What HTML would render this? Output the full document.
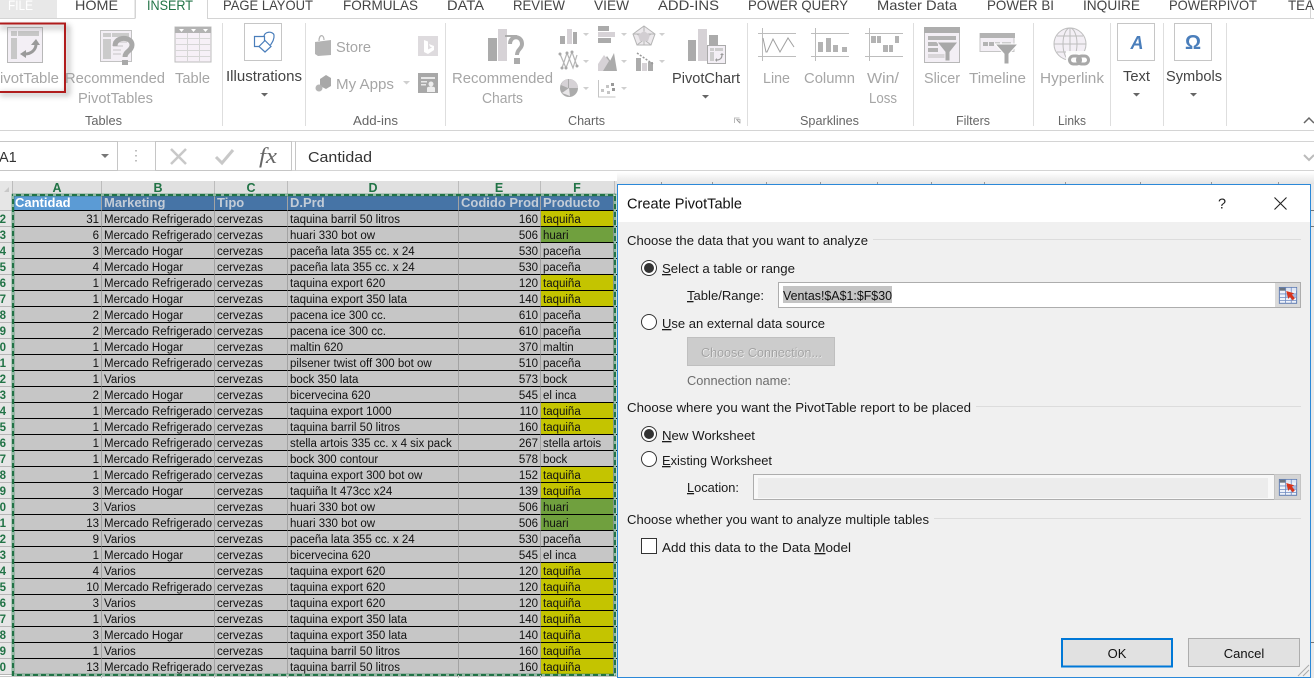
<!DOCTYPE html>
<html lang="en"><head><meta charset="utf-8"><title>Create PivotTable</title>
<style>
html,body{margin:0;padding:0;background:#fff;width:1314px;height:678px;overflow:hidden}
svg{position:absolute;left:0;top:0}
svg text{font-family:"Liberation Sans",sans-serif}
table{position:absolute;left:0;top:195px;border-collapse:separate;border-spacing:0;table-layout:fixed;width:614px;font:11.5px/11px "Liberation Sans",sans-serif;color:#111;background:#c6c6c6}
td{height:11px;padding:4px 0 0 2px;border-bottom:1px solid #000;border-right:1px solid #a3a3a3;white-space:nowrap;box-sizing:content-box}
td:first-child{background:#e6e6e6;color:#217346;font-weight:bold;text-align:right;padding:4px 0 0;border-right:1px solid #b5b5b5;border-bottom:1px solid #b5b5b5;text-indent:0}
td:first-child span{display:block;width:6px;overflow:visible;direction:rtl}
td.r{text-align:right;padding:4px 2px 0 0}
td.y{background:#c4c400}
td.g{background:#70a03e}
tr.h td{height:15px;line-height:15px;padding-top:0;background:#4674a6;color:#c3ccd7;font-weight:bold;font-size:13px}
tr.h td:first-child{background:#e6e6e6}
tr.h td.a{background:#5b9bd5;color:#fff}
</style></head><body>
<table>
<colgroup><col style="width:13px"><col style="width:89px"><col style="width:113px"><col style="width:73px"><col style="width:171px"><col style="width:82px"><col style="width:73px"></colgroup>
<tr class="h"><td></td><td class="a">Cantidad</td><td>Marketing</td><td>Tipo</td><td>D.Prd</td><td>Codido Prod</td><td>Producto</td></tr>
<tr><td><span>2</span></td><td class="r">31</td><td>Mercado Refrigerado</td><td>cervezas</td><td>taquina barril 50 litros</td><td class="r">160</td><td class="y">taquiña</td></tr>
<tr><td><span>3</span></td><td class="r">6</td><td>Mercado Refrigerado</td><td>cervezas</td><td>huari 330 bot ow</td><td class="r">506</td><td class="g">huari</td></tr>
<tr><td><span>4</span></td><td class="r">3</td><td>Mercado Hogar</td><td>cervezas</td><td>paceña lata 355 cc. x 24</td><td class="r">530</td><td>paceña</td></tr>
<tr><td><span>5</span></td><td class="r">4</td><td>Mercado Hogar</td><td>cervezas</td><td>paceña lata 355 cc. x 24</td><td class="r">530</td><td>paceña</td></tr>
<tr><td><span>6</span></td><td class="r">1</td><td>Mercado Refrigerado</td><td>cervezas</td><td>taquina export 620</td><td class="r">120</td><td class="y">taquiña</td></tr>
<tr><td><span>7</span></td><td class="r">1</td><td>Mercado Hogar</td><td>cervezas</td><td>taquina export 350 lata</td><td class="r">140</td><td class="y">taquiña</td></tr>
<tr><td><span>8</span></td><td class="r">2</td><td>Mercado Hogar</td><td>cervezas</td><td>pacena ice 300 cc.</td><td class="r">610</td><td>paceña</td></tr>
<tr><td><span>9</span></td><td class="r">2</td><td>Mercado Refrigerado</td><td>cervezas</td><td>pacena ice 300 cc.</td><td class="r">610</td><td>paceña</td></tr>
<tr><td><span>0</span></td><td class="r">1</td><td>Mercado Hogar</td><td>cervezas</td><td>maltin 620</td><td class="r">370</td><td>maltin</td></tr>
<tr><td><span>1</span></td><td class="r">1</td><td>Mercado Refrigerado</td><td>cervezas</td><td>pilsener twist off 300 bot ow</td><td class="r">510</td><td>paceña</td></tr>
<tr><td><span>2</span></td><td class="r">1</td><td>Varios</td><td>cervezas</td><td>bock 350 lata</td><td class="r">573</td><td>bock</td></tr>
<tr><td><span>3</span></td><td class="r">2</td><td>Mercado Hogar</td><td>cervezas</td><td>bicervecina 620</td><td class="r">545</td><td>el inca</td></tr>
<tr><td><span>4</span></td><td class="r">1</td><td>Mercado Refrigerado</td><td>cervezas</td><td>taquina export 1000</td><td class="r">110</td><td class="y">taquiña</td></tr>
<tr><td><span>5</span></td><td class="r">1</td><td>Mercado Refrigerado</td><td>cervezas</td><td>taquina barril 50 litros</td><td class="r">160</td><td class="y">taquiña</td></tr>
<tr><td><span>6</span></td><td class="r">1</td><td>Mercado Refrigerado</td><td>cervezas</td><td>stella artois 335 cc. x 4 six pack</td><td class="r">267</td><td>stella artois</td></tr>
<tr><td><span>7</span></td><td class="r">1</td><td>Mercado Refrigerado</td><td>cervezas</td><td>bock 300 contour</td><td class="r">578</td><td>bock</td></tr>
<tr><td><span>8</span></td><td class="r">1</td><td>Mercado Refrigerado</td><td>cervezas</td><td>taquina export 300 bot ow</td><td class="r">152</td><td class="y">taquiña</td></tr>
<tr><td><span>9</span></td><td class="r">3</td><td>Mercado Hogar</td><td>cervezas</td><td>taquiña lt 473cc x24</td><td class="r">139</td><td class="y">taquiña</td></tr>
<tr><td><span>0</span></td><td class="r">3</td><td>Varios</td><td>cervezas</td><td>huari 330 bot ow</td><td class="r">506</td><td class="g">huari</td></tr>
<tr><td><span>1</span></td><td class="r">13</td><td>Mercado Refrigerado</td><td>cervezas</td><td>huari 330 bot ow</td><td class="r">506</td><td class="g">huari</td></tr>
<tr><td><span>2</span></td><td class="r">9</td><td>Varios</td><td>cervezas</td><td>paceña lata 355 cc. x 24</td><td class="r">530</td><td>paceña</td></tr>
<tr><td><span>3</span></td><td class="r">1</td><td>Mercado Hogar</td><td>cervezas</td><td>bicervecina 620</td><td class="r">545</td><td>el inca</td></tr>
<tr><td><span>4</span></td><td class="r">4</td><td>Varios</td><td>cervezas</td><td>taquina export 620</td><td class="r">120</td><td class="y">taquiña</td></tr>
<tr><td><span>5</span></td><td class="r">10</td><td>Mercado Refrigerado</td><td>cervezas</td><td>taquina export 620</td><td class="r">120</td><td class="y">taquiña</td></tr>
<tr><td><span>6</span></td><td class="r">3</td><td>Varios</td><td>cervezas</td><td>taquina export 620</td><td class="r">120</td><td class="y">taquiña</td></tr>
<tr><td><span>7</span></td><td class="r">1</td><td>Varios</td><td>cervezas</td><td>taquina export 350 lata</td><td class="r">140</td><td class="y">taquiña</td></tr>
<tr><td><span>8</span></td><td class="r">3</td><td>Mercado Hogar</td><td>cervezas</td><td>taquina export 350 lata</td><td class="r">140</td><td class="y">taquiña</td></tr>
<tr><td><span>9</span></td><td class="r">1</td><td>Varios</td><td>cervezas</td><td>taquina barril 50 litros</td><td class="r">160</td><td class="y">taquiña</td></tr>
<tr><td><span>0</span></td><td class="r">13</td><td>Mercado Refrigerado</td><td>cervezas</td><td>taquina barril 50 litros</td><td class="r">160</td><td class="y">taquiña</td></tr>
</table>

<svg width="1314" height="678" viewBox="0 0 1314 678" xmlns="http://www.w3.org/2000/svg">
<defs>
<filter id="b" x="-20%" y="-20%" width="140%" height="140%"><feGaussianBlur stdDeviation="3"/></filter>
<linearGradient id="sh" x1="0" y1="0" x2="0" y2="1"><stop offset="0" stop-color="#fff"/><stop offset="1" stop-color="#e4e4e4"/></linearGradient>
<g id="rb">
<rect x="0.500" y="2" width="24" height="22" fill="#eef2fa" stroke="#5a78b0" stroke-width="1.300"/>
<rect x="1" y="2.500" width="9" height="4" fill="#6a7480"/>
<rect x="10" y="2.500" width="14" height="4" fill="#dfe6f4"/>
<path d="M1 11h23M1 16h23M1 20h23M9 2v22M17 2v22" stroke="#6f8ac0" stroke-width="1.100"/>
<rect x="10" y="12" width="14" height="4" fill="#a9bbdf"/>
<path d="M10 7l11 3-3 2 4 5-3 3-4-5-2 3z" fill="#d8341c"/>
</g>
</defs>

<!-- tabs -->
<rect x="0" y="0" width="57" height="18" fill="#e8e8e8"/>
<path d="M0 18.500H135V0M207.500 0V18.500H1314" fill="none" stroke="#d4d4d4"/>
<path d="M135.500 0V18M207.500 0V18" stroke="#d4d4d4"/>
<rect x="1310" y="0" width="1" height="18" fill="#d4d4d4"/>
<g font-size="14" fill="#444">
<text x="8" y="10" fill="#fff" textLength="25" lengthAdjust="spacingAndGlyphs">FILE</text>
<text x="75" y="10" textLength="43" lengthAdjust="spacingAndGlyphs">HOME</text>
<text x="147" y="10" fill="#217346" textLength="46" lengthAdjust="spacingAndGlyphs">INSERT</text>
<text x="223" y="10" textLength="90" lengthAdjust="spacingAndGlyphs">PAGE LAYOUT</text>
<text x="343" y="10" textLength="75" lengthAdjust="spacingAndGlyphs">FORMULAS</text>
<text x="447" y="10" textLength="37" lengthAdjust="spacingAndGlyphs">DATA</text>
<text x="513" y="10" textLength="52" lengthAdjust="spacingAndGlyphs">REVIEW</text>
<text x="594" y="10" textLength="35" lengthAdjust="spacingAndGlyphs">VIEW</text>
<text x="658" y="10" textLength="61" lengthAdjust="spacingAndGlyphs">ADD-INS</text>
<text x="748" y="10" textLength="100" lengthAdjust="spacingAndGlyphs">POWER QUERY</text>
<text x="877" y="10" textLength="80" lengthAdjust="spacingAndGlyphs">Master Data</text>
<text x="987" y="10" textLength="67" lengthAdjust="spacingAndGlyphs">POWER BI</text>
<text x="1083" y="10" textLength="57" lengthAdjust="spacingAndGlyphs">INQUIRE</text>
<text x="1169" y="10" textLength="88" lengthAdjust="spacingAndGlyphs">POWERPIVOT</text>
<text x="1288" y="10" textLength="26" lengthAdjust="spacingAndGlyphs">TEA</text>
</g>

<!-- ribbon separators -->
<g stroke="#dedede"><path d="M222.500 23V126M305.500 23V126M445.500 23V126M747.500 23V126M913.500 23V126M1033.500 23V126M1110.500 23V126M1163.500 23V126M1226.500 23V126"/></g>
<path d="M0 130.500H1314" stroke="#d4d4d4"/>

<!-- ribbon text -->
<g font-size="14.500" fill="#a6a6a6">
<text x="-10" y="83" textLength="69" lengthAdjust="spacingAndGlyphs">PivotTable</text>
<text x="65" y="83" textLength="100" lengthAdjust="spacingAndGlyphs">Recommended</text>
<text x="78" y="103" textLength="75" lengthAdjust="spacingAndGlyphs">PivotTables</text>
<text x="175" y="83" textLength="35" lengthAdjust="spacingAndGlyphs">Table</text>
<text x="336" y="52" textLength="35" lengthAdjust="spacingAndGlyphs">Store</text>
<text x="336" y="89" textLength="58" lengthAdjust="spacingAndGlyphs">My Apps</text>
<text x="452" y="83" textLength="101" lengthAdjust="spacingAndGlyphs">Recommended</text>
<text x="482" y="103" textLength="41" lengthAdjust="spacingAndGlyphs">Charts</text>
<text x="763" y="83" textLength="27" lengthAdjust="spacingAndGlyphs">Line</text>
<text x="804" y="83" textLength="51" lengthAdjust="spacingAndGlyphs">Column</text>
<text x="867" y="83" textLength="32" lengthAdjust="spacingAndGlyphs">Win/</text>
<text x="869" y="103" textLength="28" lengthAdjust="spacingAndGlyphs">Loss</text>
<text x="924" y="83" textLength="36" lengthAdjust="spacingAndGlyphs">Slicer</text>
<text x="969" y="83" textLength="57" lengthAdjust="spacingAndGlyphs">Timeline</text>
<text x="1040" y="83" textLength="64" lengthAdjust="spacingAndGlyphs">Hyperlink</text>
</g>
<g font-size="14.500" fill="#444">
<text x="226" y="81" textLength="76" lengthAdjust="spacingAndGlyphs">Illustrations</text>
<text x="672" y="83" textLength="68" lengthAdjust="spacingAndGlyphs">PivotChart</text>
<text x="1123" y="81" textLength="27" lengthAdjust="spacingAndGlyphs">Text</text>
<text x="1166" y="81" textLength="56" lengthAdjust="spacingAndGlyphs">Symbols</text>
</g>
<g font-size="13" fill="#666">
<text x="85" y="125" textLength="37" lengthAdjust="spacingAndGlyphs">Tables</text>
<text x="353" y="125" textLength="45" lengthAdjust="spacingAndGlyphs">Add-ins</text>
<text x="568" y="125" textLength="37" lengthAdjust="spacingAndGlyphs">Charts</text>
<text x="800" y="125" textLength="59" lengthAdjust="spacingAndGlyphs">Sparklines</text>
<text x="956" y="125" textLength="34" lengthAdjust="spacingAndGlyphs">Filters</text>
<text x="1058" y="125" textLength="28" lengthAdjust="spacingAndGlyphs">Links</text>
</g>

<!-- dropdown arrows -->
<g fill="#666">
<path d="M261 93h7l-3.500 3.500zM702 95h7l-3.500 3.500zM1133 93h7l-3.500 3.500zM1190 93h7l-3.500 3.500z"/>
</g>
<g fill="#cfcfcf">
<path d="M403 81h7l-3.500 3.500zM583 33h6l-3 3zM621 33h6l-3 3zM659 33h6l-3 3zM583 60h6l-3 3zM621 60h6l-3 3zM659 60h6l-3 3zM583 87h6l-3 3zM621 87h6l-3 3z"/>
</g>

<!-- PivotTable icon -->
<rect x="7.500" y="27.500" width="35" height="35" fill="#f3eff5" stroke="#b8b8b8"/>
<rect x="18" y="31" width="21" height="5" fill="#c8c8c8"/><rect x="11" y="31" width="6" height="5" fill="#c8c8c8"/><rect x="11" y="38" width="6" height="21" fill="#c8c8c8"/>
<path d="M25 54C31 54 36 50 36 44" fill="none" stroke="#9a9a9a" stroke-width="3"/><path d="M31 45l5-6 4 6zM26 50l-6 4 6 4z" fill="#9a9a9a"/>
<!-- Recommended PivotTables icon -->
<rect x="100.500" y="30.500" width="31" height="31" fill="#f3eff5" stroke="#c2c2c2"/>
<rect x="103" y="33" width="8" height="4" fill="#cbcbcb"/><rect x="112" y="33" width="17" height="4" fill="#cbcbcb"/><rect x="103" y="39" width="8" height="20" fill="#cbcbcb"/>
<path d="M113 42h14M113 46h10M113 50h8M113 54h8" stroke="#d5d2d5" stroke-width="1.500"/>
<path d="M115 46c0-10 17-10 17-1 0 6-7 6-7 12" fill="none" stroke="#a9a9a9" stroke-width="5"/><rect x="122" y="60" width="6" height="5" fill="#a9a9a9"/>
<!-- Table icon -->
<rect x="175" y="27" width="36" height="35" fill="#f6f0f7" stroke="#bdbdbd"/>
<rect x="175" y="27" width="36" height="6" fill="#b3b3b3"/>
<path d="M179 29h5l-2.500 3zM191 29h5l-2.500 3zM203 29h5l-2.500 3z" fill="#fff"/>
<path d="M175 38.500h36M175 44.500h36M175 50.500h36M175 56.500h36M187.500 33v29M199.500 33v29" stroke="#d6d6d6"/>
<!-- Illustrations -->
<rect x="244.500" y="23.500" width="37" height="37" fill="#fff" stroke="#c6c6c6"/>
<path d="M254.500 36.500h10v10h-10z" fill="none" stroke="#4a7ebb" stroke-width="1.200"/>
<path d="M265 40.500l6 6-6 5.500-6-5.500z" fill="#fff" stroke="#4a7ebb" stroke-width="1.200"/>
<path d="M264 37c0-6 9-6 10-2 .5 4-1.500 7-3.500 10" fill="none" stroke="#4a7ebb" stroke-width="1.200"/>
<!-- Store -->
<path d="M315 42l16-2v15l-13 1-3-2z" fill="#b3b3b3"/><path d="M319 41c0-7 5-7 5-1" fill="none" stroke="#b3b3b3" stroke-width="1.200"/>
<rect x="418" y="36" width="20" height="20" fill="#dedbde"/><path d="M424 40l4 1.500v8l4-2-2-1-1-2.500 5 2v4l-6 4-4-2z" fill="#fff"/>
<!-- My apps -->
<path d="M320 79l6-4 5 3v8l-5 3-6-3z" fill="#a8a8a8"/><circle cx="319" cy="88" r="3.500" fill="#b5b5b5"/>
<rect x="418" y="73" width="20" height="20" fill="#a8a8a8"/>
<path d="M421 77h14v2h-14zM421 81h6v1.500h-6zM421 84h5v1.500h-5z" fill="#e8e8e8"/><circle cx="431" cy="84" r="2.500" fill="#eee"/><path d="M427 92v-4c0-2 8-2 8 0v4z" fill="#eee"/>
<!-- Rec charts -->
<rect x="488" y="38" width="9" height="23" fill="#ababab"/><rect x="498" y="29" width="9" height="32" fill="#d6d2d6"/><rect x="505" y="35" width="12" height="2" fill="#ababab"/>
<path d="M510 44c0-9 12-9 12 0 0 5-5 5-5 11" fill="none" stroke="#ababab" stroke-width="4"/><rect x="514" y="58" width="6" height="6" fill="#ababab"/>
<!-- chart galleries -->
<g fill="#ababab">
<rect x="560" y="36" width="5" height="8"/><rect x="567" y="29" width="5" height="15" fill="#d6d2d6"/><rect x="573" y="32" width="4" height="12"/>
<rect x="598" y="26" width="11" height="5"/><rect x="598" y="32" width="17" height="5" fill="#d6d2d6"/><rect x="598" y="38" width="13" height="5"/>
</g>
<path d="M644 26l11 8-4 11h-14l-4-11z" fill="#ece9ec" stroke="#b5b5b5"/><path d="M644 26v19M633 34h22M637 45l14-11M651 45l-14-11" stroke="#b5b5b5"/><path d="M644 31l6 4-2 6h-8l-2-6z" fill="#d2ced2"/>
<path d="M560 54l6 14 6-16 5 14M562 68l5-15 6 15 4-13" fill="none" stroke="#b5b5b5" stroke-width="1.200"/>
<g fill="#a8a8a8"><circle cx="560" cy="54" r="1.500"/><circle cx="566" cy="68" r="1.500"/><circle cx="572" cy="52" r="1.500"/><circle cx="577" cy="66" r="1.500"/><circle cx="562" cy="68" r="1.500"/><circle cx="567" cy="53" r="1.500"/></g>
<path d="M598 71l9-15 5 7 4 8z" fill="#ababab"/><path d="M598 71v-7l6-9 5 6-6 10z" fill="#d6d2d6"/><path d="M605 71l9-18 3 18z" fill="#ababab"/>
<g fill="#ababab"><rect x="636" y="58" width="5" height="13"/><rect x="642" y="63" width="5" height="8" fill="#d6d2d6"/><rect x="648" y="62" width="5" height="9"/></g>
<path d="M637 53l16 11" stroke="#999" stroke-dasharray="2 1.500" stroke-width="1.500"/>
<circle cx="569" cy="88" r="9" fill="#ababab"/><path d="M569 88V79a9 9 0 0 1 9 9z" fill="#d6d2d6"/><path d="M561 85a9 9 0 0 1 7-6v9z" fill="#d6d2d6"/><path d="M562 93l7-5 1 8z" fill="#e8e6e8"/>
<path d="M598.500 80v17h17" fill="none" stroke="#c5c5c5"/><g fill="#c5c5c5"><rect x="601" y="89" width="3" height="3"/><rect x="606" y="85" width="3" height="3"/><rect x="611" y="83" width="3" height="3" fill="#999"/><rect x="607" y="91" width="3" height="3"/><rect x="612" y="88" width="3" height="3" fill="#999"/></g>
<!-- PivotChart -->
<rect x="688" y="40" width="8" height="21" fill="#ababab"/><rect x="698" y="29" width="9" height="32" fill="#d6d2d6"/><rect x="709" y="35" width="9" height="10" fill="#ababab"/>
<rect x="707.500" y="45.500" width="18" height="18" fill="#f3eff5" stroke="#aaa"/>
<rect x="710" y="48" width="4" height="3" fill="#ccc"/><rect x="715" y="48" width="8" height="3" fill="#ccc"/><rect x="710" y="52" width="4" height="9" fill="#ccc"/>
<path d="M717 60c3 0 5-2 5-5" fill="none" stroke="#999" stroke-width="1.200"/><path d="M720 55l2-2 2 2zM717 58l-2 2 2 2z" fill="#999"/>
<!-- launcher -->
<path d="M734.500 123v-5h5M736 119.500h4v4" fill="none" stroke="#bbb"/><path d="M737 120l3 3" stroke="#999"/>
<!-- sparkline -->
<g stroke="#bdbdbd" fill="none">
<path d="M758 33.500h38M758 56.500h38M762.500 28v33"/><path d="M763 38l3 14 1 0 6-13 7 13 8-14 6 9" stroke="#a0a0a0"/>
<path d="M811 33.500h38M811 56.500h38M815.500 28v33"/>
<path d="M865 33.500h38M865 56.500h38M869.500 28v33"/>
</g>
<g fill="#b3b3b3"><rect x="818" y="42" width="5" height="10"/><rect x="826" y="38" width="5" height="14"/><rect x="833" y="45" width="5" height="7"/><rect x="842" y="47" width="5" height="5"/>
<rect x="871" y="36" width="5" height="7"/><rect x="877" y="36" width="4" height="7"/><rect x="883" y="45" width="5" height="7"/><rect x="889" y="45" width="4" height="7"/><rect x="895" y="36" width="4" height="7"/></g>
<!-- Slicer -->
<rect x="924.500" y="27.500" width="35" height="35" fill="#f3eff5" stroke="#b8b8b8"/>
<rect x="924" y="27" width="36" height="6" fill="#adadad"/>
<g fill="#b3b3b3"><rect x="928" y="36" width="28" height="4"/><rect x="928" y="42" width="10" height="4"/><rect x="928" y="48" width="10" height="4"/></g><rect x="928" y="54" width="18" height="4" fill="#d8d5d8"/>
<path d="M937 42h21l-8 10v9h-5v-9z" fill="#a8a8a8" stroke="#f3eff5"/>
<!-- Timeline -->
<rect x="980.500" y="33.500" width="34" height="18" fill="#f3eff5" stroke="#c5c5c5" transform="translate(-.5 0)"/>
<rect x="980" y="33" width="35" height="5" fill="#b3b3b3"/>
<g fill="#b3b3b3"><rect x="983" y="42" width="5" height="4"/><rect x="989" y="42" width="5" height="4"/><rect x="995" y="42" width="5" height="3" fill="#ccc"/><rect x="1002" y="42" width="9" height="3" fill="#ccc"/></g>
<path d="M995 44h23l-9 10v10h-5v-10z" fill="#a8a8a8" stroke="#fff"/>
<!-- Hyperlink -->
<circle cx="1070" cy="44" r="16" fill="#f3eff5" stroke="#bdbdbd"/>
<ellipse cx="1070" cy="44" rx="7" ry="16" fill="none" stroke="#bdbdbd"/><path d="M1070 28v32M1054 44h32M1057 36h26M1057 52h26" stroke="#bdbdbd"/>
<path d="M1066 51h24v15h-24z" fill="#fff" opacity=".9"/>
<rect x="1069.500" y="56" width="11" height="8" rx="4" fill="none" stroke="#a8a8a8" stroke-width="3"/><rect x="1077.500" y="56" width="11" height="8" rx="4" fill="none" stroke="#a8a8a8" stroke-width="3"/>
<!-- Text/Symbols -->
<rect x="1117.500" y="23.500" width="37" height="37" fill="#fff" stroke="#c6c6c6"/>
<text x="1137" y="49" text-anchor="middle" font-size="18" font-style="italic" font-weight="bold" fill="#4a7ebb">A</text>
<rect x="1174.500" y="23.500" width="37" height="37" fill="#fff" stroke="#c6c6c6"/>
<text x="1193" y="49" text-anchor="middle" font-size="20" font-weight="bold" fill="#4a7ebb">Ω</text>
<path d="M1304 123l5-5 5 5" fill="none" stroke="#666" stroke-width="1.500"/>

<!-- red highlight -->
<path d="M-3 24H65V91H-3" fill="none" stroke="#888" stroke-width="3" opacity=".7" filter="url(#b)" transform="translate(3 3)"/>
<path d="M-2 23.500H65V92H-2" fill="none" stroke="#b01c1c" stroke-width="2"/>

<!-- formula bar -->
<path d="M0 141.500H1314M0 170.500H1314" stroke="#d4d4d4"/>
<path d="M0 141.500H117.500V170.500H0M155.500 141.500H291.500V170.500H155.500zM295.500 141.500V170.500" fill="none" stroke="#c6c6c6"/>
<text x="-1" y="162" font-size="14.500" fill="#333">A1</text>
<path d="M101 154h8l-4 4z" fill="#777"/>
<path d="M136 150v1.500M136 155v1.500M136 160v1.500" stroke="#aaa" stroke-width="1.500"/>
<path d="M171 149l15 15M186 149l-15 15" stroke="#c8c8c8" stroke-width="2.500"/>
<path d="M216 157l6 6 11-13" fill="none" stroke="#c8c8c8" stroke-width="3"/>
<text x="259" y="163" style="font-family:'Liberation Serif',serif" font-size="22" font-style="italic" fill="#666" textLength="18" lengthAdjust="spacingAndGlyphs">fx</text>
<text x="308" y="162" font-size="14.500" fill="#333" textLength="64" lengthAdjust="spacingAndGlyphs">Cantidad</text>
<path d="M1304 155l5 5 5-5" fill="none" stroke="#bbb" stroke-width="2"/>

<!-- sheet top / column heads -->
<rect x="0" y="181" width="617" height="14" fill="#e0e0e0"/>
<rect x="0" y="181" width="12" height="14" fill="#e6e6e6"/>
<path d="M4 192h5v-5z" fill="#c8c8c8"/>
<path d="M12.500 181v14M101.500 181v14M214.500 181v14M287.500 181v14M458.500 181v14M540.500 181v14M614.500 181v14" stroke="#bcbcbc"/>
<g font-size="12.500" font-weight="bold" fill="#217346" text-anchor="middle">
<text x="57" y="192">A</text><text x="158" y="192">B</text><text x="251" y="192">C</text><text x="373" y="192">D</text><text x="499" y="192">E</text><text x="577" y="192">F</text>
</g>
<rect x="617" y="172" width="697" height="12" fill="url(#sh)"/>
<path d="M661.500 182v2M712.500 182v2M766.500 182v2M820.500 182v2M877.500 182v2M931.500 182v2M984.500 182v2M1065.500 182v2M1140.500 182v2M1211.500 182v2M1278.500 182v2" stroke="#999"/>
<rect x="1311" y="184" width="3" height="494" fill="#e9e9e9"/>
<path d="M1311 210.500h3M1311 226.500h3M1311 642.500h3" stroke="#777"/>
<!-- row stubs right of F -->
<rect x="614" y="195" width="3" height="481" fill="#fff"/>
<path d="M614 210.500h3M614 226.500h3M614 242.500h3M614 258.500h3M614 274.500h3M614 290.500h3M614 306.500h3M614 322.500h3M614 338.500h3M614 354.500h3M614 370.500h3M614 386.500h3M614 402.500h3M614 418.500h3M614 434.500h3M614 450.500h3M614 466.500h3M614 482.500h3M614 498.500h3M614 514.500h3M614 530.500h3M614 546.500h3M614 562.500h3M614 578.500h3M614 594.500h3M614 610.500h3M614 626.500h3M614 642.500h3M614 658.500h3" stroke="#000"/>
<!-- marching ants -->
<rect x="13" y="195" width="602" height="480" fill="none" stroke="#217346" stroke-width="2.500"/>
<rect x="13" y="195" width="602" height="480" fill="none" stroke="#fff" stroke-width="1" stroke-dasharray="3 5"/>
<path d="M0 676.500H617M101.500 675v3M214.500 675v3M287.500 675v3M458.500 675v3M540.500 675v3" stroke="#c8c8c8"/>

<!-- dialog -->
<rect x="617.500" y="184.500" width="693" height="493" fill="#f0f0f0" stroke="#2b88d8"/>
<rect x="618" y="185" width="692" height="37" fill="#fff"/>
<text x="627" y="208.500" font-size="14.500" fill="#111" textLength="115" lengthAdjust="spacingAndGlyphs">Create PivotTable</text>
<text x="1218" y="208.500" font-size="14.500" fill="#222">?</text>
<path d="M1274.500 197.500l12 12M1286.500 197.500l-12 12" stroke="#222" stroke-width="1.100"/>

<g font-size="13" fill="#1a1a1a">
<text x="627" y="245" textLength="241" lengthAdjust="spacingAndGlyphs">Choose the data that you want to analyze</text>
<text x="662" y="273" textLength="133" lengthAdjust="spacingAndGlyphs"><tspan text-decoration="underline">S</tspan>elect a table or range</text>
<text x="687" y="300" textLength="77" lengthAdjust="spacingAndGlyphs"><tspan text-decoration="underline">T</tspan>able/Range:</text>
<text x="662" y="328" textLength="163" lengthAdjust="spacingAndGlyphs"><tspan text-decoration="underline">U</tspan>se an external data source</text>
<text x="627" y="412" textLength="344" lengthAdjust="spacingAndGlyphs">Choose where you want the PivotTable report to be placed</text>
<text x="662" y="440" textLength="93" lengthAdjust="spacingAndGlyphs"><tspan text-decoration="underline">N</tspan>ew Worksheet</text>
<text x="662" y="465" textLength="110" lengthAdjust="spacingAndGlyphs"><tspan text-decoration="underline">E</tspan>xisting Worksheet</text>
<text x="687" y="492" textLength="52" lengthAdjust="spacingAndGlyphs"><tspan text-decoration="underline">L</tspan>ocation:</text>
<text x="627" y="524" textLength="302" lengthAdjust="spacingAndGlyphs">Choose whether you want to analyze multiple tables</text>
<text x="662" y="552" textLength="189" lengthAdjust="spacingAndGlyphs">Add this data to the Data <tspan text-decoration="underline">M</tspan>odel</text>
</g>
<path d="M873 239.500H1301M976 406.500H1301M934 518.500H1301" stroke="#dcdcdc"/>

<!-- radios -->
<circle cx="649" cy="268" r="7.500" fill="#fff" stroke="#333"/><circle cx="649" cy="268" r="5" fill="#333"/>
<circle cx="649" cy="322" r="7.500" fill="#fff" stroke="#333"/>
<circle cx="649" cy="434" r="7.500" fill="#fff" stroke="#333"/><circle cx="649" cy="434" r="5" fill="#333"/>
<circle cx="649" cy="459" r="7.500" fill="#fff" stroke="#333"/>
<rect x="641.500" y="538.500" width="15" height="15" fill="#fff" stroke="#333"/>

<!-- table/range input -->
<rect x="778.500" y="282.500" width="497" height="25" fill="#fff" stroke="#adadad"/>
<rect x="783" y="286" width="109" height="17" fill="#c4c4c4"/>
<text x="783" y="300" font-size="13" fill="#111" textLength="109" lengthAdjust="spacingAndGlyphs">Ventas!$A$1:$F$30</text>
<rect x="1275" y="282" width="26" height="26" fill="#adadad"/><rect x="1275" y="283" width="25" height="24" fill="#dadada"/>
<use href="#rb" transform="translate(1279 286) scale(.72)"/>

<!-- choose connection -->
<rect x="687.500" y="337.500" width="147" height="28" fill="#cccccc" stroke="#bfbfbf"/>
<text x="701.500" y="357.500" font-size="13" fill="#fff" textLength="121" lengthAdjust="spacingAndGlyphs">Choose Connection...</text>
<text x="701" y="357" font-size="13" fill="#a3a3a3" textLength="121" lengthAdjust="spacingAndGlyphs">Choose Connection...</text>
<text x="687" y="385" font-size="13" fill="#6d6d6d" textLength="104" lengthAdjust="spacingAndGlyphs">Connection name:</text>

<!-- location input -->
<rect x="753.500" y="474.500" width="521" height="25" fill="#f8f8f8" stroke="#adadad"/>
<rect x="758" y="478" width="510" height="20" fill="#ececec"/>
<rect x="1274" y="474" width="27" height="26" fill="#c4c4c4"/><rect x="1275" y="475" width="25" height="24" fill="#d4d4d4"/>
<use href="#rb" transform="translate(1279 478) scale(.72)"/>

<!-- buttons -->
<rect x="1062" y="639" width="110" height="27.500" fill="#e1e1e1" stroke="#0078d7" stroke-width="2"/>
<text x="1117" y="658" font-size="13" fill="#111" text-anchor="middle">OK</text>
<rect x="1188.500" y="638.500" width="111" height="28" fill="#e1e1e1" stroke="#adadad"/>
<text x="1244" y="658" font-size="13" fill="#111" text-anchor="middle">Cancel</text>
<path d="M1298 676l11-11M1303 676l6-6" stroke="#aaa"/>
</svg>
</body></html>
